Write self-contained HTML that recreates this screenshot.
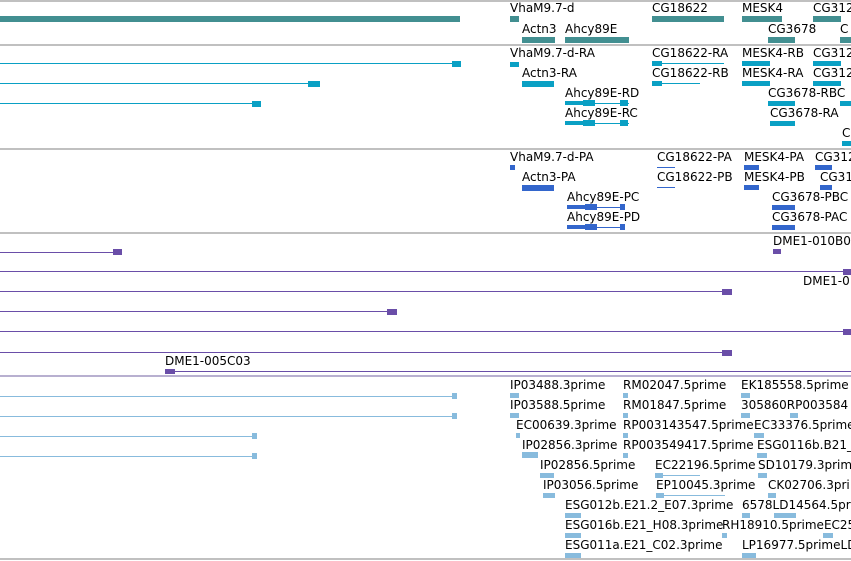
<!DOCTYPE html>
<html><head><meta charset="utf-8"><style>
body{margin:0;width:851px;height:561px;overflow:hidden;background:#fff;position:relative;font-family:"DejaVu Sans","Liberation Sans",sans-serif;font-size:12px;color:#000}
div{position:absolute}
.s{left:0;width:851px;height:2px;background:#c0c0c0}
.t{white-space:nowrap;line-height:13px}
.g{background:#428f91}.c{background:#0aa0c4}.b{background:#3366cc}.p{background:#6a4ea8}.l{background:#88bbdd}
</style></head><body>
<div class="s" style="top:0"></div>
<div class="s" style="top:44px"></div>
<div class="s" style="top:148px"></div>
<div class="s" style="top:232px"></div>
<div class="s" style="top:375px;background:#b8b0d0"></div>
<div class="s" style="top:558px"></div>

<!-- track 1 -->
<div class="g" style="left:0;top:16px;width:460px;height:6px"></div>
<div class="t" style="left:510px;top:2px">VhaM9.7-d</div>
<div class="g" style="left:510px;top:16px;width:9px;height:6px"></div>
<div class="t" style="left:522px;top:23px">Actn3</div>
<div class="g" style="left:522px;top:37px;width:33px;height:6px"></div>
<div class="t" style="left:565px;top:23px">Ahcy89E</div>
<div class="g" style="left:565px;top:37px;width:64px;height:6px"></div>
<div class="t" style="left:652px;top:2px">CG18622</div>
<div class="g" style="left:652px;top:16px;width:72px;height:6px"></div>
<div class="t" style="left:742px;top:2px">MESK4</div>
<div class="g" style="left:742px;top:16px;width:40px;height:6px"></div>
<div class="t" style="left:813px;top:2px">CG312</div>
<div class="g" style="left:813px;top:16px;width:28px;height:6px"></div>
<div class="t" style="left:768px;top:23px">CG3678</div>
<div class="g" style="left:768px;top:37px;width:27px;height:6px"></div>
<div class="t" style="left:840px;top:23px">C</div>
<div class="g" style="left:840px;top:37px;width:11px;height:6px"></div>

<!-- track 2 -->
<div class="c" style="left:0;top:63px;width:455px;height:1px"></div>
<div class="c" style="left:452px;top:61px;width:9px;height:6px"></div>
<div class="c" style="left:0;top:83px;width:310px;height:1px"></div>
<div class="c" style="left:308px;top:81px;width:12px;height:6px"></div>
<div class="c" style="left:0;top:103px;width:254px;height:1px"></div>
<div class="c" style="left:252px;top:101px;width:9px;height:6px"></div>
<div class="t" style="left:510px;top:47px">VhaM9.7-d-RA</div>
<div class="c" style="left:510px;top:62px;width:9px;height:5px"></div>
<div class="t" style="left:522px;top:67px">Actn3-RA</div>
<div class="c" style="left:522px;top:81px;width:32px;height:6px"></div>
<div class="t" style="left:565px;top:87px">Ahcy89E-RD</div>
<div class="c" style="left:565px;top:103px;width:64px;height:1px"></div>
<div class="c" style="left:565px;top:101px;width:18px;height:4px"></div>
<div class="c" style="left:583px;top:100px;width:12px;height:6px"></div>
<div class="c" style="left:620px;top:100px;width:8px;height:6px"></div>
<div class="t" style="left:565px;top:107px">Ahcy89E-RC</div>
<div class="c" style="left:565px;top:123px;width:64px;height:1px"></div>
<div class="c" style="left:565px;top:121px;width:18px;height:4px"></div>
<div class="c" style="left:583px;top:120px;width:12px;height:6px"></div>
<div class="c" style="left:620px;top:120px;width:8px;height:6px"></div>
<div class="t" style="left:652px;top:47px">CG18622-RA</div>
<div class="c" style="left:652px;top:63px;width:72px;height:1px"></div>
<div class="c" style="left:652px;top:61px;width:10px;height:5px"></div>
<div class="t" style="left:652px;top:67px">CG18622-RB</div>
<div class="c" style="left:652px;top:83px;width:48px;height:1px"></div>
<div class="c" style="left:652px;top:81px;width:10px;height:5px"></div>
<div class="t" style="left:742px;top:47px">MESK4-RB</div>
<div class="c" style="left:742px;top:61px;width:28px;height:5px"></div>
<div class="t" style="left:742px;top:67px">MESK4-RA</div>
<div class="c" style="left:742px;top:81px;width:28px;height:5px"></div>
<div class="t" style="left:813px;top:47px">CG312</div>
<div class="c" style="left:813px;top:61px;width:28px;height:5px"></div>
<div class="t" style="left:813px;top:67px">CG312</div>
<div class="c" style="left:813px;top:81px;width:28px;height:5px"></div>
<div class="t" style="left:768px;top:87px">CG3678-RBC</div>
<div class="c" style="left:768px;top:101px;width:27px;height:5px"></div>
<div class="c" style="left:840px;top:101px;width:11px;height:5px"></div>
<div class="t" style="left:770px;top:107px">CG3678-RA</div>
<div class="c" style="left:770px;top:121px;width:25px;height:5px"></div>
<div class="t" style="left:842px;top:127px">C</div>
<div class="c" style="left:842px;top:141px;width:9px;height:5px"></div>

<!-- track 3 -->
<div class="t" style="left:510px;top:151px">VhaM9.7-d-PA</div>
<div class="b" style="left:510px;top:165px;width:5px;height:5px"></div>
<div class="t" style="left:522px;top:171px">Actn3-PA</div>
<div class="b" style="left:522px;top:185px;width:32px;height:6px"></div>
<div class="t" style="left:567px;top:191px">Ahcy89E-PC</div>
<div class="b" style="left:567px;top:207px;width:58px;height:1px"></div>
<div class="b" style="left:567px;top:205px;width:18px;height:4px"></div>
<div class="b" style="left:585px;top:204px;width:12px;height:6px"></div>
<div class="b" style="left:620px;top:204px;width:5px;height:6px"></div>
<div class="t" style="left:567px;top:211px">Ahcy89E-PD</div>
<div class="b" style="left:567px;top:227px;width:58px;height:1px"></div>
<div class="b" style="left:567px;top:225px;width:18px;height:4px"></div>
<div class="b" style="left:585px;top:224px;width:12px;height:6px"></div>
<div class="b" style="left:620px;top:224px;width:5px;height:6px"></div>
<div class="t" style="left:657px;top:151px">CG18622-PA</div>
<div class="b" style="left:657px;top:167px;width:18px;height:1px"></div>
<div class="t" style="left:657px;top:171px">CG18622-PB</div>
<div class="b" style="left:657px;top:187px;width:18px;height:1px"></div>
<div class="t" style="left:744px;top:151px">MESK4-PA</div>
<div class="b" style="left:744px;top:165px;width:15px;height:5px"></div>
<div class="t" style="left:744px;top:171px">MESK4-PB</div>
<div class="b" style="left:744px;top:185px;width:15px;height:5px"></div>
<div class="t" style="left:815px;top:151px">CG312</div>
<div class="b" style="left:815px;top:165px;width:17px;height:5px"></div>
<div class="t" style="left:820px;top:171px">CG31</div>
<div class="b" style="left:820px;top:185px;width:12px;height:5px"></div>
<div class="t" style="left:772px;top:191px">CG3678-PBC</div>
<div class="b" style="left:772px;top:205px;width:23px;height:5px"></div>
<div class="t" style="left:772px;top:211px">CG3678-PAC</div>
<div class="b" style="left:772px;top:225px;width:23px;height:5px"></div>

<!-- track 4 -->
<div class="t" style="left:773px;top:235px">DME1-010B0</div>
<div class="p" style="left:773px;top:249px;width:8px;height:5px"></div>
<div class="p" style="left:0;top:252px;width:118px;height:1px"></div>
<div class="p" style="left:113px;top:249px;width:9px;height:6px"></div>
<div class="p" style="left:0;top:271px;width:851px;height:1px"></div>
<div class="p" style="left:843px;top:269px;width:8px;height:6px"></div>
<div class="t" style="left:803px;top:275px">DME1-0</div>
<div class="p" style="left:0;top:291px;width:728px;height:1px"></div>
<div class="p" style="left:722px;top:289px;width:10px;height:6px"></div>
<div class="p" style="left:0;top:311px;width:392px;height:1px"></div>
<div class="p" style="left:387px;top:309px;width:10px;height:6px"></div>
<div class="p" style="left:0;top:331px;width:851px;height:1px"></div>
<div class="p" style="left:843px;top:329px;width:8px;height:6px"></div>
<div class="p" style="left:0;top:352px;width:728px;height:1px"></div>
<div class="p" style="left:722px;top:350px;width:10px;height:6px"></div>
<div class="t" style="left:165px;top:355px">DME1-005C03</div>
<div class="p" style="left:165px;top:371px;width:686px;height:1px"></div>
<div class="p" style="left:165px;top:369px;width:10px;height:5px"></div>

<!-- track 5 -->
<div class="l" style="left:0;top:396px;width:457px;height:1px"></div>
<div class="l" style="left:452px;top:393px;width:5px;height:6px"></div>
<div class="l" style="left:0;top:416px;width:457px;height:1px"></div>
<div class="l" style="left:452px;top:413px;width:5px;height:6px"></div>
<div class="l" style="left:0;top:436px;width:257px;height:1px"></div>
<div class="l" style="left:252px;top:433px;width:5px;height:6px"></div>
<div class="l" style="left:0;top:456px;width:257px;height:1px"></div>
<div class="l" style="left:252px;top:453px;width:5px;height:6px"></div>

<div class="t" style="left:510px;top:379px">IP03488.3prime</div><div class="l" style="left:510px;top:393px;width:9px;height:5px"></div>
<div class="t" style="left:623px;top:379px">RM02047.5prime</div><div class="l" style="left:623px;top:393px;width:5px;height:5px"></div>
<div class="t" style="left:741px;top:379px">EK185558.5prime</div><div class="l" style="left:741px;top:393px;width:9px;height:5px"></div>
<div class="t" style="left:510px;top:399px">IP03588.5prime</div><div class="l" style="left:510px;top:413px;width:9px;height:5px"></div>
<div class="t" style="left:623px;top:399px">RM01847.5prime</div><div class="l" style="left:623px;top:413px;width:5px;height:5px"></div>
<div class="t" style="left:741px;top:399px">305860RP003584</div><div class="l" style="left:741px;top:413px;width:9px;height:5px"></div><div class="l" style="left:790px;top:413px;width:8px;height:5px"></div>
<div class="t" style="left:516px;top:419px">EC00639.3prime</div><div class="l" style="left:516px;top:433px;width:4px;height:5px"></div>
<div class="t" style="left:623px;top:419px">RP003143547.5prime</div><div class="l" style="left:623px;top:433px;width:5px;height:5px"></div>
<div class="t" style="left:754px;top:419px">EC33376.5prime</div><div class="l" style="left:754px;top:433px;width:10px;height:5px"></div>
<div class="t" style="left:522px;top:439px">IP02856.3prime</div><div class="l" style="left:522px;top:452px;width:16px;height:6px"></div>
<div class="t" style="left:623px;top:439px">RP003549417.5prime</div><div class="l" style="left:623px;top:453px;width:5px;height:5px"></div>
<div class="t" style="left:757px;top:439px">ESG0116b.B21_</div><div class="l" style="left:757px;top:453px;width:10px;height:5px"></div>
<div class="t" style="left:540px;top:459px">IP02856.5prime</div><div class="l" style="left:540px;top:473px;width:14px;height:5px"></div>
<div class="t" style="left:655px;top:459px">EC22196.5prime</div><div class="l" style="left:655px;top:475px;width:45px;height:1px"></div><div class="l" style="left:655px;top:473px;width:8px;height:5px"></div>
<div class="t" style="left:758px;top:459px">SD10179.3prime</div><div class="l" style="left:758px;top:473px;width:9px;height:5px"></div>
<div class="t" style="left:543px;top:479px">IP03056.5prime</div><div class="l" style="left:543px;top:493px;width:12px;height:5px"></div>
<div class="t" style="left:656px;top:479px">EP10045.3prime</div><div class="l" style="left:656px;top:495px;width:69px;height:1px"></div><div class="l" style="left:656px;top:493px;width:8px;height:5px"></div>
<div class="t" style="left:768px;top:479px">CK02706.3pri</div><div class="l" style="left:768px;top:493px;width:8px;height:5px"></div>
<div class="t" style="left:565px;top:499px">ESG012b.E21.2_E07.3prime</div><div class="l" style="left:565px;top:513px;width:16px;height:5px"></div>
<div class="t" style="left:742px;top:499px">6578LD14564.5pr</div><div class="l" style="left:742px;top:513px;width:8px;height:5px"></div><div class="l" style="left:774px;top:513px;width:22px;height:5px"></div>
<div class="t" style="left:565px;top:519px">ESG016b.E21_H08.3prime</div><div class="l" style="left:565px;top:533px;width:16px;height:5px"></div>
<div class="t" style="left:722px;top:519px">RH18910.5primeEC25</div><div class="l" style="left:722px;top:533px;width:5px;height:5px"></div><div class="l" style="left:823px;top:533px;width:10px;height:5px"></div>
<div class="t" style="left:565px;top:539px">ESG011a.E21_C02.3prime</div><div class="l" style="left:565px;top:553px;width:16px;height:5px"></div>
<div class="t" style="left:742px;top:539px">LP16977.5primeLD</div><div class="l" style="left:742px;top:553px;width:14px;height:5px"></div>
</body></html>
